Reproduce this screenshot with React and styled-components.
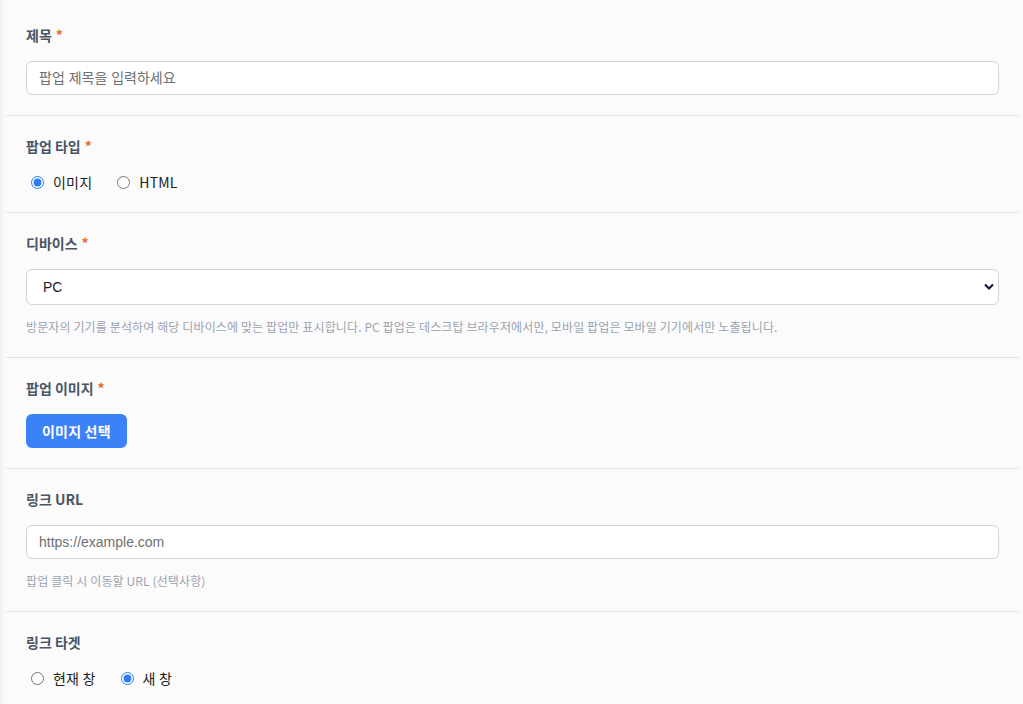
import React, { useState } from 'react';
import styled, { createGlobalStyle } from 'styled-components';

const GlobalStyle = createGlobalStyle`
  html, body {
    margin: 0;
    padding: 0;
    background: #fbfbfc;
  }
  body {
    font-family: "Noto Sans CJK KR", "Noto Sans", sans-serif;
    color: #1f2937;
  }
  * {
    box-sizing: border-box;
  }
`;

const Page = styled.div`
  min-height: 100vh;
  padding: 5px 4px 0 6px;
  background: linear-gradient(to right, #efeff0 0, #f8f8f9 4px, #fbfbfc 7px);
`;

const Form = styled.form`
  display: flex;
  flex-direction: column;
`;

const Section = styled.div`
  padding: 20px 20px;
  border-bottom: 1px solid #e2e2e5;

  &:last-child {
    border-bottom: none;
  }
`;

const Label = styled.label`
  display: block;
  font-size: 14px;
  line-height: 20px;
  font-weight: 700;
  color: #4b5563;
  margin-bottom: 16px;
`;

const Required = styled.span`
  color: #e8692b;
  margin-left: 4px;
`;

const TextInput = styled.input`
  display: block;
  width: 100%;
  height: 34px;
  padding: 0 12px;
  border: 1px solid #d3d5da;
  border-radius: 6px;
  background: #fff;
  font-family: "Liberation Sans", "Noto Sans CJK KR", sans-serif;
  font-size: 14px;
  color: #222;
  outline: none;

  &::placeholder {
    color: #6f6f6f;
  }
`;

const SelectWrap = styled.div`
  position: relative;
`;

const Select = styled.select`
  display: block;
  width: 100%;
  height: 36px;
  padding: 0 16px;
  border: 1px solid #d3d5da;
  border-radius: 6px;
  background: #fff;
  font-family: "Liberation Sans", "Noto Sans CJK KR", sans-serif;
  font-size: 14px;
  color: #1a1a2e;
  appearance: none;
  outline: none;
`;

const Chevron = styled.svg`
  position: absolute;
  right: 5px;
  top: 50%;
  margin-top: -4px;
  pointer-events: none;
`;

const Help = styled.p`
  margin: 12px 0 0;
  font-size: 12px;
  line-height: 20px;
  letter-spacing: 0.12px;
  color: #9ca3af;
`;

const RadioRow = styled.div`
  display: flex;
  align-items: center;
  gap: 20px;
  height: 20px;
`;

const RadioOption = styled.label`
  display: flex;
  align-items: center;
  gap: 9px;
  font-size: 14px;
  line-height: 20px;
  letter-spacing: 0.2px;
  color: #222;
  cursor: pointer;

  input {
    margin: 0 0 0 5px;
    width: 13px;
    height: 13px;
    accent-color: #2f7cf0;
  }
`;

const PrimaryButton = styled.button`
  height: 34px;
  padding: 0 16px;
  border: none;
  border-radius: 6px;
  background: #3b82f6;
  color: #fff;
  font-family: "Noto Sans CJK KR", sans-serif;
  font-size: 14px;
  font-weight: 700;
  letter-spacing: 0.2px;
  cursor: pointer;

  &:hover {
    background: #2f73e0;
  }
`;

const Radios = ({ name, options, value, onChange }) => (
  <RadioRow>
    {options.map((o) => (
      <RadioOption key={o.value}>
        <input
          type="radio"
          name={name}
          value={o.value}
          checked={value === o.value}
          onChange={() => onChange(o.value)}
        />
        {o.label}
      </RadioOption>
    ))}
  </RadioRow>
);

const App = () => {
  const [title, setTitle] = useState('');
  const [type, setType] = useState('image');
  const [device, setDevice] = useState('pc');
  const [url, setUrl] = useState('');
  const [target, setTarget] = useState('_blank');

  return (
    <Page>
      <GlobalStyle />
      <Form onSubmit={(e) => e.preventDefault()}>
        <Section>
          <Label>제목<Required>*</Required></Label>
          <TextInput
            type="text"
            value={title}
            onChange={(e) => setTitle(e.target.value)}
            placeholder="팝업 제목을 입력하세요"
          />
        </Section>

        <Section>
          <Label>팝업 타입<Required>*</Required></Label>
          <Radios
            name="type"
            value={type}
            onChange={setType}
            options={[
              { value: 'image', label: '이미지' },
              { value: 'html', label: 'HTML' },
            ]}
          />
        </Section>

        <Section>
          <Label>디바이스<Required>*</Required></Label>
          <SelectWrap>
            <Select value={device} onChange={(e) => setDevice(e.target.value)}>
              <option value="pc">PC</option>
              <option value="mobile">모바일</option>
            </Select>
            <Chevron width="10" height="8" viewBox="0 0 10 8">
              <path d="M1 1.5 L5 5.5 L9 1.5" fill="none" stroke="#1c1b33" strokeWidth="2.2" />
            </Chevron>
          </SelectWrap>
          <Help>
            방문자의 기기를 분석하여 해당 디바이스에 맞는 팝업만 표시합니다. PC 팝업은 데스크탑 브라우저에서만, 모바일 팝업은 모바일 기기에서만 노출됩니다.
          </Help>
        </Section>

        <Section>
          <Label>팝업 이미지<Required>*</Required></Label>
          <PrimaryButton type="button">이미지 선택</PrimaryButton>
        </Section>

        <Section>
          <Label>링크 URL</Label>
          <TextInput
            type="text"
            value={url}
            onChange={(e) => setUrl(e.target.value)}
            placeholder="https://example.com"
          />
          <Help>팝업 클릭 시 이동할 URL (선택사항)</Help>
        </Section>

        <Section>
          <Label>링크 타겟</Label>
          <Radios
            name="target"
            value={target}
            onChange={setTarget}
            options={[
              { value: '_self', label: '현재 창' },
              { value: '_blank', label: '새 창' },
            ]}
          />
        </Section>
      </Form>
    </Page>
  );
};

export default App;
